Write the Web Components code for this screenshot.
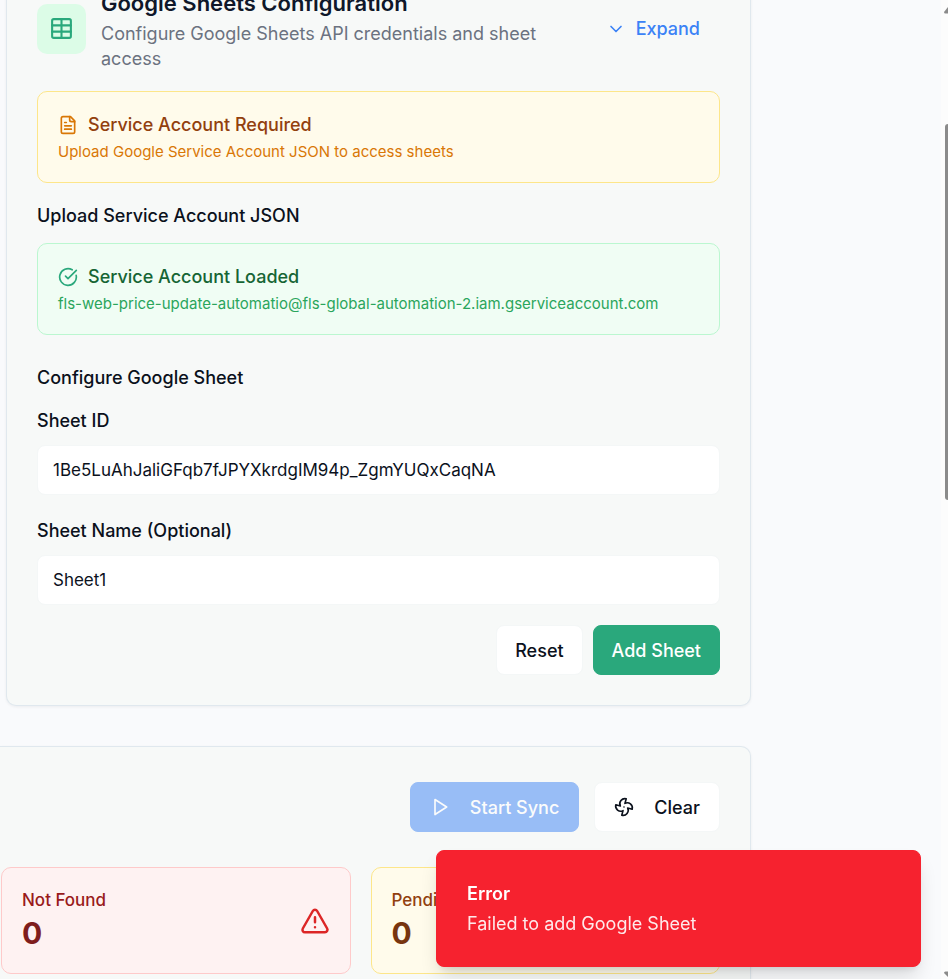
<!DOCTYPE html>
<html lang="en">
<head>
<meta charset="utf-8">
<title>Google Sheets Configuration</title>
<style>
  html, body { height: 100%; }
  body { margin: 0; overflow: hidden; background: #f9fafc; color: #0b111c;
    font: 400 18px/25px Inter, "Liberation Sans", sans-serif; }
</style>
</head>
<body>
<sync-page></sync-page>
<script>
const ICONS = {
  sheet: '<rect x="3" y="3" width="18" height="18" rx="1.6"/><path d="M12 3v18M3 9h18M3 15h18"/>',
  file: '<path d="M15 2H6a2 2 0 0 0-2 2v16a2 2 0 0 0 2 2h12a2 2 0 0 0 2-2V7Z"/><path d="M14 2v4a2 2 0 0 0 2 2h4M10 9H8M16 13H8M16 17H8"/>',
  check: '<path d="M21.801 10A10 10 0 1 1 17 3.335"/><path d="m9 11 3 3L22 4"/>',
  chevron: '<path d="m6 9 6 6 6-6"/>',
  play: '<polygon points="6 3 20 12 6 21 6 3"/>',
  fan: '<path d="M10.827 16.379a6.082 6.082 0 0 1-8.618-7.002l5.412 1.45a6.082 6.082 0 0 1 7.002-8.618l-1.45 5.412a6.082 6.082 0 0 1 8.618 7.002l-5.412-1.45a6.082 6.082 0 0 1-7.002 8.618l1.45-5.412Z"/><path d="M12 12v.01"/>',
  warning: '<path d="m21.73 18-8-14a2 2 0 0 0-3.48 0l-8 14A2 2 0 0 0 4 21h16a2 2 0 0 0 1.73-3"/><path d="M12 9v4M12 17h.01"/>'
};

function define(name, render) {
  customElements.define(name, class extends HTMLElement {
    constructor() { super(); this.attachShadow({ mode: 'open' }); }
    connectedCallback() {
      const t = document.createElement('template');
      t.innerHTML = '<style>*{box-sizing:border-box}</style>' + render(this);
      this.shadowRoot.replaceChildren(t.content.cloneNode(true));
    }
  });
}

define('ui-icon', el => `
  <style>
    :host { display: block; flex: none; width: var(--size, 20px); height: var(--size, 20px); }
    svg { display: block; width: 100%; height: 100%; }
  </style>
  <svg viewBox="0 0 24 24" fill="none" stroke="currentColor" stroke-width="2" stroke-linecap="round" stroke-linejoin="round" aria-hidden="true">${ICONS[el.getAttribute('name')]}</svg>`);

define('ui-button', el => `
  <style>
    :host { display: block; flex: none; }
    button { display: flex; align-items: center; gap: 20px; height: 50px; padding: 0 18px; border: 1px solid #f4f7f7;
      border-radius: 8px; background: #fff; color: inherit; font: inherit; font-weight: 500; white-space: nowrap; }
    :host([icon]) button { padding: 0 19px; }
    :host([kind=primary]) button { background: #2aa87c; border-color: #2aa87c; color: #fff; }
    :host([kind=sync]) button { background: #3b82f6; border-color: #3b82f6; color: #fff; opacity: .5; }
    :host([kind=ghost]) button { gap: 10px; background: none; border-color: transparent; color: #3b82f6; }
  </style>
  <button type="button" ${el.hasAttribute('disabled') ? 'disabled' : ''}>
    ${el.hasAttribute('icon') ? `<ui-icon name="${el.getAttribute('icon')}"></ui-icon>` : ''}<slot></slot>
  </button>`);

define('ui-card', () => `
  <style>
    :host { display: block; box-sizing: border-box; padding: 30px; background: #f7f9f8; border: 1px solid #e0e8ee;
      border-radius: 10px; box-shadow: 0 1px 3px rgba(15, 23, 42, .06); }
    :host([cut=top]) { padding-top: 0; border-top: 0; border-radius: 0 0 10px 10px; }
    :host([cut=left]) { padding: 35px 30px 30px 1px; border-left: 0; border-radius: 0 10px 0 0; }
  </style>
  <slot></slot>`);

define('ui-alert', el => `
  <style>
    :host { display: block; padding: 20px; border: 1px solid; border-radius: 10px; }
    :host([kind=warning]) { background: #fffbeb; border-color: #fde68a; --strong: #92400e; --soft: #d97706; }
    :host([kind=success]) { background: #f0fdf4; border-color: #bbf7d0; --strong: #166534; --soft: #2aa55c; --mark: #2aa87c; }
    div { display: flex; align-items: center; gap: 10px; color: var(--strong); font-weight: 500; }
    ui-icon { color: var(--mark, var(--soft)); }
    p { margin: 5px 0 0; color: var(--soft); font-size: 15px; line-height: 20px; }
  </style>
  <div><ui-icon name="${el.getAttribute('icon')}"></ui-icon>${el.getAttribute('heading')}</div>
  <p><slot></slot></p>`);

define('ui-field', el => `
  <style>
    :host { display: block; }
    label { display: block; line-height: 32px; font-weight: 500; margin-bottom: 8px; }
    input { display: block; width: 100%; height: 50px; padding: 0 15px; border: 1px solid #f4f7f7; border-radius: 8px;
      background: #fff; color: inherit; font: inherit; font-size: 17px; outline: 0; }
  </style>
  <label for="f">${el.getAttribute('label')}</label>
  <input id="f" type="text" value="${el.getAttribute('value')}">`);

define('ui-stat', el => `
  <style>
    :host { display: flex; align-items: center; justify-content: space-between; padding: 20px; border: 1px solid; border-radius: 10px; }
    :host([kind=missing]) { background: #fef2f2; border-color: #fecaca; --label: #991b1b; --value: #7f1d1d; --mark: #dc2626; }
    :host([kind=pending]) { background: #fffbeb; border-color: #fde68a; --label: #92400e; --value: #78350f; }
    p { margin: 0; color: var(--label); font-size: 17px; font-weight: 500; }
    strong { display: block; color: var(--value); font-size: 30px; line-height: 40px; font-weight: 700; }
    ui-icon { --size: 30px; color: var(--mark); }
  </style>
  <div><p>${el.getAttribute('label')}</p><strong><slot></slot></strong></div>
  ${el.hasAttribute('icon') ? `<ui-icon name="${el.getAttribute('icon')}"></ui-icon>` : ''}`);

define('sheets-config', () => `
  <style>
    :host { display: block; }
    header { display: flex; align-items: center; gap: 15px; margin-bottom: 20px; }
    .tile { flex: none; display: grid; place-items: center; width: 49px; height: 50px; border-radius: 10px; background: #dcfce7; color: #2aa87c; --size: 25px; }
    .text { flex: 1; min-width: 0; }
    h2 { margin: 0; font-size: 22px; line-height: 35px; font-weight: 600; color: #0f172a; }
    header p { margin: 0; color: #6b7280; }
    h3 { margin: 20px 0 15px; font: inherit; font-weight: 500; }
    h3.next { margin-top: 30px; }
    ui-field + ui-field { margin-top: 20px; }
    .actions { display: flex; justify-content: flex-end; gap: 10px; margin-top: 20px; }
  </style>
  <header>
    <div class="tile"><ui-icon name="sheet"></ui-icon></div>
    <div class="text"><h2>Google Sheets Configuration</h2><p>Configure Google Sheets API credentials and sheet access</p></div>
    <ui-button kind="ghost" icon="chevron">Expand</ui-button>
  </header>
  <ui-alert kind="warning" icon="file" heading="Service Account Required">Upload Google Service Account JSON to access sheets</ui-alert>
  <h3>Upload Service Account JSON</h3>
  <ui-alert kind="success" icon="check" heading="Service Account Loaded">fls-web-price-update-automatio@fls-global-automation-2.iam.gserviceaccount.com</ui-alert>
  <h3 class="next">Configure Google Sheet</h3>
  <ui-field label="Sheet ID" value="1Be5LuAhJaliGFqb7fJPYXkrdgIM94p_ZgmYUQxCaqNA"></ui-field>
  <ui-field label="Sheet Name (Optional)" value="Sheet1"></ui-field>
  <div class="actions"><ui-button>Reset</ui-button><ui-button kind="primary">Add Sheet</ui-button></div>`);

define('sync-panel', () => `
  <style>
    :host { display: block; }
    .actions { display: flex; justify-content: flex-end; gap: 15px; margin-bottom: 35px; }
    .stats { display: grid; grid-template-columns: 1fr 1fr; gap: 20px; }
  </style>
  <div class="actions"><ui-button kind="sync" icon="play" disabled>Start Sync</ui-button><ui-button icon="fan">Clear</ui-button></div>
  <div class="stats">
    <ui-stat kind="missing" label="Not Found" icon="warning">0</ui-stat>
    <ui-stat kind="pending" label="Pending">0</ui-stat>
  </div>`);

define('ui-toast', el => `
  <style>
    :host { position: fixed; right: 27px; bottom: 12px; width: 485px; box-sizing: border-box; padding: 30px; border: 1px solid #f6222f;
      border-radius: 8px; background: #f6222f; color: #fff; box-shadow: 0 12px 20px -4px rgba(0,0,0,.14), 0 5px 8px -5px rgba(0,0,0,.14); }
    strong { display: block; font-weight: 600; margin-bottom: 5px; }
    p { margin: 0; opacity: .9; }
  </style>
  <div role="alert"><strong>${el.getAttribute('heading')}</strong><p><slot></slot></p></div>`);

define('page-scrollbar', () => `
  <style>
    :host { display: flex; flex-direction: column; align-items: flex-end; width: 7px; height: 100%; overflow: hidden; background: #fcfcfc; }
    .track { flex: 1; display: grid; grid-template-rows: 104fr 376fr 459fr; width: 3px; }
    i { grid-row: 2; background: #8b8b8b; border-radius: 4px 0 0 4px; }
    svg { display: block; flex: none; width: 4px; height: 20px; fill: #8b8b8b; }
  </style>
  <svg viewBox="0 0 4 20" aria-hidden="true"><path d="M4 7 0 12q0 1.500 1.500 1.500H4z"/></svg>
  <div class="track"><i></i></div>
  <svg viewBox="0 0 4 20" aria-hidden="true"><path d="M4 18 0 14q0-1.500 1.500-1.500H4z"/></svg>`);

define('sync-page', () => `
  <style>
    :host { display: grid; grid-template-columns: minmax(0, 1fr) 190px auto; height: 100vh; overflow: hidden; }
    main { display: flex; flex-direction: column; gap: 40px; margin-top: -14px; min-height: 0; }
    .config { margin-left: 6px; }
    page-scrollbar { grid-column: 3; }
  </style>
  <main>
    <ui-card class="config" cut="top"><sheets-config></sheets-config></ui-card>
    <ui-card cut="left"><sync-panel></sync-panel></ui-card>
  </main>
  <page-scrollbar></page-scrollbar>
  <ui-toast heading="Error">Failed to add Google Sheet</ui-toast>`);
</script>
</body>
</html>
